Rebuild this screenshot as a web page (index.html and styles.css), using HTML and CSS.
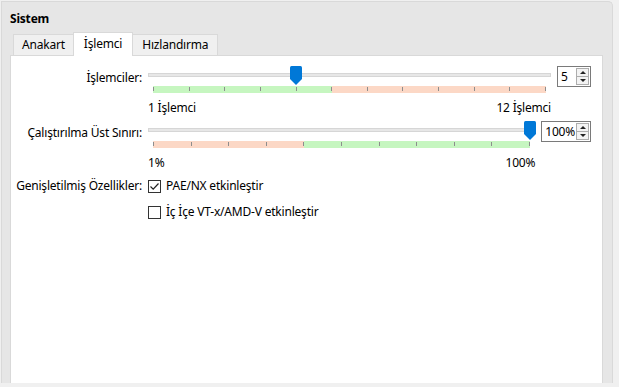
FILE: index.html
```html
<!DOCTYPE html>
<html lang="tr">
<head>
  <meta charset="UTF-8">
  <title>Sistem</title>
  <link rel="stylesheet" href="styles.css">
</head>
<body>
  <div class="frame">
    <div class="title">Sistem</div>
    <div class="tabs">
      <div class="tab">Anakart</div>
      <div class="tab active">İşlemci</div>
      <div class="tab">Hızlandırma</div>
    </div>
    <div class="panel">

      <div class="row">
        <div class="label label-slider">İşlemciler:</div>
        <div class="slider-row">
          <div class="slider-col">
            <div class="slider">
              <div class="track"></div>
              <div class="scale">
                <div class="zone green" style="width:45.45%"></div>
                <div class="zone red"></div>
                <div class="ticks">
                  <span></span><span></span><span></span><span></span><span></span><span></span>
                  <span></span><span></span><span></span><span></span><span></span><span></span>
                </div>
              </div>
              <div class="rail">
                <svg class="handle" style="left:36.36%" width="12" height="19" viewBox="0 0 12 19">
                  <path d="M1.5 0 H10.5 Q12 0 12 1.5 V13 L6 19 L0 13 V1.5 Q0 0 1.5 0 Z" fill="#0078d7"/>
                </svg>
              </div>
            </div>
            <div class="ends"><span>1 İşlemci</span><span>12 İşlemci</span></div>
          </div>
          <div class="spin">
            <div class="spin-value">5</div>
            <div class="spin-btns"><div class="up"></div><div class="down"></div></div>
          </div>
        </div>
      </div>

      <div class="row row-second">
        <div class="label label-slider">Çalıştırılma Üst Sınırı:</div>
        <div class="slider-row">
          <div class="slider-col">
            <div class="slider">
              <div class="track"></div>
              <div class="scale">
                <div class="zone red" style="width:40%;flex:none"></div>
                <div class="zone green grow"></div>
                <div class="ticks">
                  <span></span><span></span><span></span><span></span><span></span><span></span>
                  <span></span><span></span><span></span><span></span><span></span>
                </div>
              </div>
              <div class="rail">
                <svg class="handle" style="left:100%" width="12" height="19" viewBox="0 0 12 19">
                  <path d="M1.5 0 H10.5 Q12 0 12 1.5 V13 L6 19 L0 13 V1.5 Q0 0 1.5 0 Z" fill="#0078d7"/>
                </svg>
              </div>
            </div>
            <div class="ends"><span>1%</span><span>100%</span></div>
          </div>
          <div class="spin">
            <div class="spin-value">100%</div>
            <div class="spin-btns"><div class="up"></div><div class="down"></div></div>
          </div>
        </div>
      </div>

      <div class="row row-check">
        <div class="label">Genişletilmiş Özellikler:</div>
        <div class="check">
          <span class="box">
            <svg width="11" height="11" viewBox="0 0 11 11"><path d="M1.5 5.5 L4.2 8.2 L9.5 2.5" fill="none" stroke="#222" stroke-width="1.2"/></svg>
          </span>
          PAE/NX etkinleştir
        </div>
      </div>

      <div class="row row-check2">
        <div class="label"></div>
        <div class="check">
          <span class="box"></span>
          İç İçe VT-x/AMD-V etkinleştir
        </div>
      </div>

    </div>
  </div>
</body>
</html>
```

FILE: styles.css
```css
body {
  margin: 0;
  background: #f0f0f0;
  font-family: "Noto Sans", sans-serif;
  font-size: 12px;
  letter-spacing: -0.2px;
  color: #000;
}
.frame {
  margin: 1px 6px 4px 1px;
  height: 382px;
  box-sizing: border-box;
  border: 1px solid #d9d9d9;
  border-bottom: none;
  border-radius: 0 5px 0 0;
  background: #e6e6e6;
  display: flex;
  flex-direction: column;
}
.title {
  font-weight: bold;
  padding: 9px 0 0 8px;
  line-height: 16px;
}
.tabs {
  display: flex;
  align-items: flex-end;
  margin: 5px 0 0 11px;
  height: 23px;
}
.tab {
  height: 21px;
  box-sizing: border-box;
  padding: 0 8px;
  border: 1px solid #d9d9d9;
  border-bottom: none;
  background: #f0f0f0;
  line-height: 20px;
}
.tab:last-child {
  padding: 0 9px;
}
.tab + .tab {
  margin-left: -1px;
}
.tab.active {
  position: relative;
  z-index: 1;
  height: 24px;
  padding: 0 10px;
  margin-bottom: -1px;
  background: #fff;
  line-height: 21px;
}
.panel {
  flex: 1;
  margin: 0 9px 0 8px;
  padding: 10px 11px 0 0;
  border: 1px solid #d9d9d9;
  border-bottom: none;
  background: #fff;
}
.row {
  display: flex;
  gap: 6px;
}
.row-second {
  margin-top: 5px;
}
.row-check {
  margin-top: 7px;
}
.row-check2 {
  margin-top: 10px;
}
.label {
  width: 131px;
  flex: none;
  text-align: right;
  line-height: 16px;
}
.label-slider {
  padding-top: 4px;
}
.slider-row {
  flex: 1;
  display: flex;
  gap: 6px;
  align-items: flex-start;
}
.slider-col {
  flex: 1;
}
.slider {
  position: relative;
  height: 20px;
  padding-top: 7px;
}
.track {
  height: 4px;
  box-sizing: border-box;
  border: 1px solid #d6d6d6;
  background: #e7e7e7;
}
.scale {
  position: relative;
  display: flex;
  height: 7px;
  margin: 9px 5px 0;
}
.zone.green {
  background: #c6f6c0;
}
.zone.red {
  background: #fcd8c6;
  flex: 1;
}
.zone.grow {
  flex: 1;
}
.ticks {
  position: absolute;
  top: 0;
  left: 0;
  right: 0;
  display: flex;
  justify-content: space-between;
}
.ticks span {
  width: 1px;
  height: 4px;
  margin-top: 1px;
  background: #8d8d8d;
}
.rail {
  position: absolute;
  top: 0;
  left: 5px;
  right: 5px;
  height: 19px;
}
.handle {
  position: absolute;
  top: 0;
  margin-left: -6px;
}
.ends {
  display: flex;
  justify-content: space-between;
  margin-top: 7px;
  line-height: 16px;
}
.spin {
  display: flex;
  height: 21px;
  box-sizing: border-box;
  border: 1px solid #7a7a7a;
  background: #fff;
}
.spin-value {
  min-width: 14px;
  padding: 0 1px 0 3px;
  line-height: 19px;
}
.spin-btns {
  width: 13px;
  margin: 1px 1px 1px 0;
  box-sizing: border-box;
  border: 1px solid #adadad;
  background: #f3f3f3;
  display: flex;
  flex-direction: column;
}
.spin-btns div {
  flex: 1;
  display: flex;
  align-items: center;
  justify-content: center;
}
.spin-btns .up {
  border-bottom: 1px solid #adadad;
}
.spin-btns .up::after {
  content: "";
  border-left: 3px solid transparent;
  border-right: 3px solid transparent;
  border-bottom: 3px solid #222;
}
.spin-btns .down::after {
  content: "";
  border-left: 3px solid transparent;
  border-right: 3px solid transparent;
  border-top: 3px solid #222;
}
.check {
  display: flex;
  align-items: center;
  gap: 5px;
  line-height: 16px;
}
.box {
  width: 13px;
  height: 13px;
  box-sizing: border-box;
  border: 1px solid #333;
  background: #fff;
  display: flex;
  align-items: center;
  justify-content: center;
}
```
